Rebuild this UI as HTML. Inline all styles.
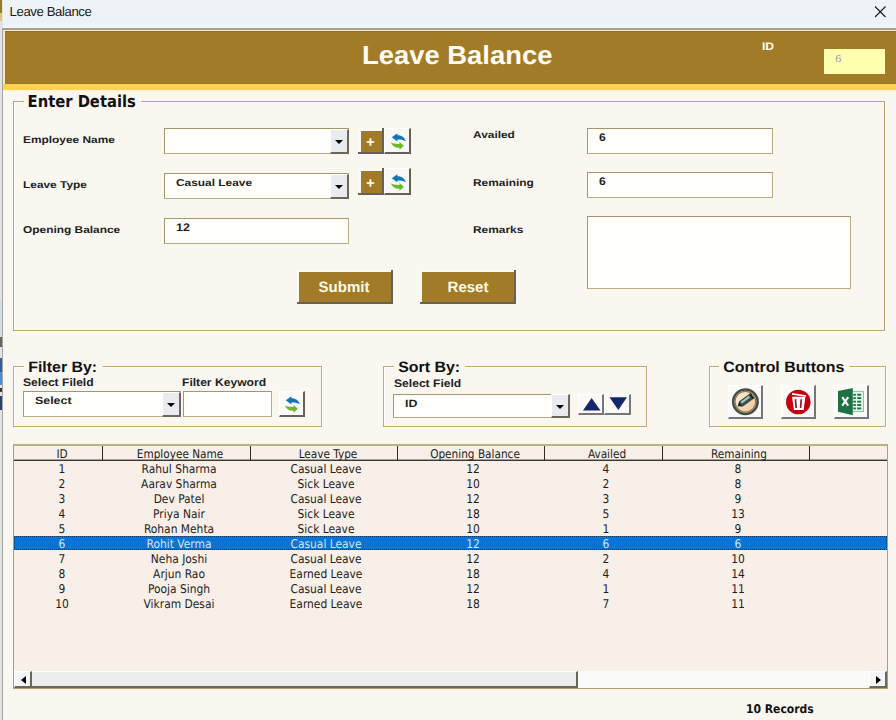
<!DOCTYPE html>
<html><head><meta charset="utf-8"><title>Leave Balance</title>
<style>
*{box-sizing:border-box;margin:0;padding:0}
html,body{width:896px;height:720px;overflow:hidden}
body{position:relative;text-rendering:geometricPrecision;background:#faf7f1;font-family:"Liberation Sans",sans-serif;color:#1c1c1c}
.a{position:absolute}
.t{position:absolute;white-space:nowrap;line-height:1}
.lbl,.val{font-weight:bold;font-size:10px;text-rendering:geometricPrecision;color:#1e1e1e;transform:scaleX(1.19);transform-origin:0 0;margin-top:1.95px;margin-left:-0.2px}
.gt{font-weight:bold;font-size:15px;color:#111;background:#faf7f1;transform:scaleX(1.06);transform-origin:0 0}
.lbl2{font-size:11px;transform:scaleX(1.1)}
.val2{font-size:10.5px;transform:scaleX(1.18)}
.grp{position:absolute;border:1px solid #b9a670;box-shadow:1px 1px 0 #fff, inset 1px 1px 0 #fff}
.tb{position:absolute;background:#fffefb;border:1px solid #b9ab82;border-top-color:#a4966f;border-left-color:#a4966f}
.dd{position:absolute;background:#e9ebf0;border-right:2px solid #6d6757;border-bottom:2px solid #6d6757;border-left:1px solid #fff;border-top:1px solid #fff}
.dd:after{content:"";position:absolute;left:4px;top:10px;border-left:4px solid transparent;border-right:4px solid transparent;border-top:4.5px solid #000}
.btn{position:absolute;border-right:2px solid #666258;border-bottom:2px solid #666258;border-left:1px solid #fff;border-top:1px solid #fff}
.brown{background:#a17b27}
.white{background:#f9f8f6}
.soft{border-right-color:#76767a;border-bottom-color:#76767a;background:#faf9f8}
.lst{font-family:"DejaVu Sans Condensed","DejaVu Sans","Liberation Sans",sans-serif;font-size:12px;color:#1d1d1d}
.c{position:absolute;white-space:nowrap;line-height:1;transform:translateX(-50%) scaleX(0.975)}
.r{transform:translateX(-50%) scaleX(0.99)}
</style></head><body>

<!-- title bar -->
<div class="a" style="left:0;top:0;width:896px;height:28px;background:#eef3f8"></div>
<div class="a" style="left:0;top:17px;width:896px;height:6px;background:#ebf2f9"></div>
<div class="a" style="left:0;top:26px;width:896px;height:2px;background:#f3f6fa"></div>
<div class="a" style="left:0;top:28px;width:896px;height:2px;background:#a5a199"></div>
<div class="t" style="left:9.6px;top:5.4px;font-size:13.2px;letter-spacing:-0.42px;color:#1b1b1b">Leave Balance</div>
<svg class="a" style="left:872px;top:4px" width="16" height="16" viewBox="0 0 16 16"><path d="M3 2.5 L13.5 13 M13.5 2.5 L3 13" stroke="#1a1a1a" stroke-width="1.1" fill="none"/></svg>

<!-- left strip -->
<div class="a" style="left:0;top:0;width:3px;height:720px;background:#e3e4df"></div>
<div class="a" style="left:2px;top:28px;width:1px;height:692px;background:#a3a3a8"></div>
<div class="a" style="left:0;top:300px;width:2px;height:36px;background:#d3dbe6"></div>
<div class="a" style="left:0;top:337px;width:2px;height:10px;background:#6b665c"></div>
<div class="a" style="left:0;top:358px;width:2px;height:14px;background:#2f5f95"></div>
<div class="a" style="left:0;top:372px;width:2px;height:13px;background:#4a8fd8"></div>
<div class="a" style="left:0;top:388px;width:2px;height:4px;background:#3a3a3a"></div>
<div class="a" style="left:0;top:396px;width:2px;height:14px;background:#27456b"></div>
<div class="a" style="left:0;top:0;width:2px;height:13px;background:#9d7a2c"></div>
<div class="a" style="left:0;top:13px;width:2px;height:8px;background:#dcc67e"></div>

<!-- header -->
<div class="a" style="left:3px;top:30px;width:893px;height:53.6px;background:#a17b27;border-left:2px solid #fbe6c4;border-top:1px solid #fbe6c4"></div>
<div class="a" style="left:5px;top:31px;width:891px;height:1px;background:#93722a"></div>
<div class="a" style="left:5px;top:82.6px;width:891px;height:1px;background:#94742a"></div>
<div class="a" style="left:3px;top:83.6px;width:893px;height:6px;background:#ffd34e"></div>
<div class="a" style="left:3px;top:89.6px;width:893px;height:1px;background:#fdf3d0"></div>
<div class="t" style="left:361.8px;top:42px;font-size:26px;font-weight:bold;color:#fffdf5;transform:scaleX(1.054);transform-origin:0 0">Leave Balance</div>
<div class="t lbl" style="left:761.8px;top:39.9px;font-size:11px;transform:scaleX(1.1);color:#fffdf5">ID</div>
<div class="a" style="left:824.4px;top:49.4px;width:60.4px;height:24.7px;background:#ffffad"></div>
<div class="t lbl" style="left:835px;top:52.6px;font-weight:normal;color:#a3a3a3">6</div>

<!-- Enter Details group -->
<div class="grp" style="left:13px;top:101px;width:872px;height:230px"></div>
<div class="t gt" style="left:23.6px;top:94.3px;padding:0 5px 0 4px;font-family:'DejaVu Sans Condensed','Liberation Sans',sans-serif;font-size:16.4px;transform:none">Enter Details</div>

<div class="t lbl" style="left:23.4px;top:134.1px">Employee Name</div>
<div class="t lbl" style="left:23.4px;top:179.1px">Leave Type</div>
<div class="t lbl" style="left:23.4px;top:224.2px">Opening Balance</div>
<div class="t lbl" style="left:473px;top:129px">Availed</div>
<div class="t lbl" style="left:473px;top:176.7px">Remaining</div>
<div class="t lbl" style="left:473px;top:223.6px">Remarks</div>

<div class="tb" style="left:164px;top:128px;width:185px;height:26px"></div>
<div class="dd" style="left:330px;top:129px;width:19px;height:25px"></div>
<div class="tb" style="left:164px;top:173px;width:185px;height:26px"></div>
<div class="dd" style="left:330px;top:174px;width:19px;height:25px"></div>
<div class="t val" style="left:175.8px;top:177.3px">Casual Leave</div>
<div class="tb" style="left:164px;top:218px;width:185px;height:26px"></div>
<div class="t val lbl2" style="left:175.8px;top:220.9px;transform:scaleX(1.14)">12</div>

<div class="a" style="left:358px;top:128px;width:26px;height:26px;background:#666258"><div class="a" style="left:0;top:0;width:24px;height:24px;background:#fcfaf6"></div><div class="a" style="left:3px;top:3px;width:21px;height:21px;background:#a17b27"></div></div>
<div class="t" style="left:365.9px;top:135.3px;font-size:15px;font-weight:bold;color:#fffbe8">+</div>
<div class="btn white" style="left:384px;top:128px;width:27px;height:26px"></div>
<div class="a" style="left:358px;top:168px;width:26px;height:27px;background:#666258"><div class="a" style="left:0;top:0;width:24px;height:25px;background:#fcfaf6"></div><div class="a" style="left:3px;top:3px;width:21px;height:22px;background:#a17b27"></div></div>
<div class="t" style="left:365.9px;top:176.2px;font-size:15px;font-weight:bold;color:#fffbe8">+</div>
<div class="btn white" style="left:384px;top:168px;width:27px;height:27px"></div>

<div class="tb" style="left:587px;top:128px;width:186px;height:26px"></div>
<div class="t val lbl2" style="left:599.2px;top:131.3px">6</div>
<div class="tb" style="left:587px;top:172px;width:186px;height:26px"></div>
<div class="t val lbl2" style="left:599.2px;top:175.5px">6</div>
<div class="tb" style="left:587px;top:216px;width:264px;height:73px"></div>

<div class="a" style="left:296.5px;top:270.2px;width:96.5px;height:34.3px;background:#666258"><div class="a" style="left:0;top:0;width:94.6px;height:32.1px;background:#fcfaf6"></div><div class="a" style="left:2.4px;top:2.2px;width:92.2px;height:29.9px;background:#a17b27"></div></div>
<div class="t" style="left:318.6px;top:280.2px;font-size:15px;font-weight:bold;color:#fffbe8">Submit</div>
<div class="a" style="left:419.8px;top:270.2px;width:96.7px;height:34.3px;background:#666258"><div class="a" style="left:0;top:0;width:94.7px;height:32.1px;background:#fcfaf6"></div><div class="a" style="left:2.4px;top:2.2px;width:92.3px;height:29.9px;background:#a17b27"></div></div>
<div class="t" style="left:447.6px;top:280.2px;font-size:15px;font-weight:bold;color:#fffbe8">Reset</div>

<!-- Filter By -->
<div class="grp" style="left:13px;top:366px;width:309px;height:61px;border-color:#c7a872"></div>
<div class="t gt" style="left:24px;top:360.1px;padding:0 5px 0 4px">Filter By:</div>
<div class="t lbl lbl2" style="left:23.3px;top:376.5px">Select Fileld</div>
<div class="t lbl lbl2" style="left:182.5px;top:376.5px">Filter Keyword</div>
<div class="tb" style="left:23px;top:391px;width:158px;height:26px"></div>
<div class="dd" style="left:162px;top:392px;width:19px;height:25px"></div>
<div class="t val val2" style="left:34.9px;top:393.85px">Select</div>
<div class="tb" style="left:183px;top:391px;width:89px;height:26px"></div>
<div class="btn white" style="left:279px;top:391px;width:26px;height:26px;background:#fbfaf8"></div>

<!-- Sort By -->
<div class="grp" style="left:383px;top:366px;width:264px;height:61px;border-color:#c7a872"></div>
<div class="t gt" style="left:394px;top:360.1px;padding:0 5px 0 4px">Sort By:</div>
<div class="t lbl lbl2" style="left:393.8px;top:376.7px">Select Field</div>
<div class="tb" style="left:393px;top:393.6px;width:176px;height:24.6px"></div>
<div class="dd" style="left:551px;top:393.6px;width:18.5px;height:24.6px"></div>
<div class="t val val2" style="left:405.6px;top:397.1px">ID</div>
<div class="btn white soft" style="left:578px;top:394px;width:26px;height:21px"></div>
<div class="btn white soft" style="left:604px;top:394px;width:27px;height:21px"></div>
<svg class="a" style="left:578px;top:394px" width="54" height="21" viewBox="0 0 54 21"><path d="M13.6 4 L22.5 16.5 L5 16.5 Z M31.5 3.3 L49 3.3 L40.3 16 Z" fill="#14276b"/></svg>

<!-- Control Buttons -->
<div class="grp" style="left:709px;top:366px;width:177px;height:61px;border-color:#c7a872"></div>
<div class="t gt" style="left:719px;top:360.1px;padding:0 5px 0 4px">Control Buttons</div>
<div class="btn white soft" style="left:728px;top:385px;width:35px;height:34px"></div>
<div class="btn white soft" style="left:781px;top:385px;width:35px;height:34px"></div>
<div class="btn white soft" style="left:834px;top:385px;width:35px;height:34px"></div>

<svg class="a" style="left:384px;top:128px" width="27" height="26" viewBox="0 0 27 26"><path d="M7.8 9.3 L13.4 5.2 L13.4 7.3 C18 7.3 21 9.8 21.8 13.6 C19.5 11.6 17 11.3 13.4 11.4 L13.4 13.6 Z" fill="#1273b7"/><path d="M19.9 17.8 L15.5 13.9 L15.5 16 C11 16 8 15.5 6.8 14.3 C8 18 11 20 15.5 19.8 L15.5 21.8 Z" fill="#6bb82d"/></svg>
<svg class="a" style="left:384px;top:168.5px" width="27" height="26" viewBox="0 0 27 26"><path d="M7.8 9.3 L13.4 5.2 L13.4 7.3 C18 7.3 21 9.8 21.8 13.6 C19.5 11.6 17 11.3 13.4 11.4 L13.4 13.6 Z" fill="#1273b7"/><path d="M19.9 17.8 L15.5 13.9 L15.5 16 C11 16 8 15.5 6.8 14.3 C8 18 11 20 15.5 19.8 L15.5 21.8 Z" fill="#6bb82d"/></svg>
<svg class="a" style="left:278.4px;top:391.3px" width="27" height="26" viewBox="0 0 27 26"><path d="M7.8 9.3 L13.4 5.2 L13.4 7.3 C18 7.3 21 9.8 21.8 13.6 C19.5 11.6 17 11.3 13.4 11.4 L13.4 13.6 Z" fill="#1273b7"/><path d="M19.9 17.8 L15.5 13.9 L15.5 16 C11 16 8 15.5 6.8 14.3 C8 18 11 20 15.5 19.8 L15.5 21.8 Z" fill="#6bb82d"/></svg>
<svg class="a" style="left:728px;top:385px" width="35" height="34" viewBox="0 0 35 34">
<defs><linearGradient id="pg" x1="0" y1="0" x2="1" y2="1"><stop offset="0.2" stop-color="#fdeccd"/><stop offset="0.9" stop-color="#f2c29b"/></linearGradient></defs>
<circle cx="17.4" cy="16.7" r="12.2" fill="url(#pg)" stroke="#414e49" stroke-width="2.6"/>
<circle cx="17.4" cy="16.7" r="10.3" fill="none" stroke="#8a7a52" stroke-width="1.1"/>
<g transform="rotate(-36 17.3 15.8)"><rect x="12" y="12.6" width="12" height="6.4" fill="#35504f"/><rect x="13" y="13.8" width="10" height="2.2" fill="#a9c6c6"/><path d="M12 12.6 L8 15.8 L12 19 Z" fill="#17221f"/><rect x="24" y="12.6" width="2.2" height="6.4" fill="#1c1c1c"/></g>
</svg>
<svg class="a" style="left:781px;top:385px" width="35" height="34" viewBox="0 0 35 34">
<circle cx="17.3" cy="17" r="12.3" fill="#c5000d"/>
<path d="M11 11.8 L24.4 11.8 L22.6 25 L13 25 Z" fill="#fff"/>
<path d="M14.4 14.2 L15.2 23 M20.2 14.2 L19.6 23" stroke="#8e1c25" stroke-width="1.7" fill="none"/>
<path d="M11 8.9 L25 11" stroke="#fff" stroke-width="1.7"/>
</svg>
<svg class="a" style="left:834px;top:385px" width="35" height="34" viewBox="0 0 35 34">
<rect x="16" y="6.3" width="13.4" height="20.3" fill="#e4f8ec" stroke="#7dbb98" stroke-width="0.9"/>
<rect x="19.3" y="8.8" width="2.6" height="1.9" fill="#1f7145"/><rect x="23.2" y="8.8" width="4" height="1.9" fill="#1f7145"/><rect x="19.3" y="12.2" width="2.6" height="1.9" fill="#1f7145"/><rect x="23.2" y="12.2" width="4" height="1.9" fill="#1f7145"/><rect x="19.3" y="15.7" width="2.6" height="1.9" fill="#1f7145"/><rect x="23.2" y="15.7" width="4" height="1.9" fill="#1f7145"/><rect x="19.3" y="19.1" width="2.6" height="1.9" fill="#1f7145"/><rect x="23.2" y="19.1" width="4" height="1.9" fill="#1f7145"/><rect x="19.3" y="22.5" width="2.6" height="1.9" fill="#1f7145"/><rect x="23.2" y="22.5" width="4" height="1.9" fill="#1f7145"/>
<path d="M4 5.9 L18.8 3 L18.8 30.2 L4 26.8 Z" fill="#1f7145"/>
<path d="M8.3 12.2 L14.2 20.6 M14.2 12.2 L8.3 20.6" stroke="#fff" stroke-width="2.1"/>
</svg>
<!-- List -->
<div class="a" style="left:13px;top:444px;width:875px;height:245px;background:#f8efe8;border:1px solid #b39f66;border-top:2px solid #bab285"></div>
<div class="a" style="left:14px;top:459px;width:873px;height:2px;background:linear-gradient(#a39f99 0 50%,#3c3934 50% 100%)"></div>

<div class="lst">
<div class="a" style="left:102px;top:446px;width:1px;height:14px;background:#2e2a22"></div>
<div class="a" style="left:250px;top:446px;width:1px;height:14px;background:#2e2a22"></div>
<div class="a" style="left:397px;top:446px;width:1px;height:14px;background:#2e2a22"></div>
<div class="a" style="left:544px;top:446px;width:1px;height:14px;background:#2e2a22"></div>
<div class="a" style="left:662px;top:446px;width:1px;height:14px;background:#2e2a22"></div>
<div class="a" style="left:809px;top:446px;width:1px;height:14px;background:#2e2a22"></div>
<div class="c" style="left:62px;top:448.2px">ID</div>
<div class="c" style="left:180px;top:448.2px">Employee Name</div>
<div class="c" style="left:327.5px;top:448.2px">Leave Type</div>
<div class="c" style="left:474.5px;top:448.2px">Opening Balance</div>
<div class="c" style="left:606.5px;top:448.2px">Availed</div>
<div class="c" style="left:738.9px;top:448.2px">Remaining</div>
<div class="c r" style="left:62px;top:463.4px">1</div>
<div class="c r" style="left:179.2px;top:463.4px">Rahul Sharma</div>
<div class="c r" style="left:326.3px;top:463.4px">Casual Leave</div>
<div class="c r" style="left:473.2px;top:463.4px">12</div>
<div class="c r" style="left:605.7px;top:463.4px">4</div>
<div class="c r" style="left:738px;top:463.4px">8</div>
<div class="c r" style="left:62px;top:478.4px">2</div>
<div class="c r" style="left:179.2px;top:478.4px">Aarav Sharma</div>
<div class="c r" style="left:326.3px;top:478.4px">Sick Leave</div>
<div class="c r" style="left:473.2px;top:478.4px">10</div>
<div class="c r" style="left:605.7px;top:478.4px">2</div>
<div class="c r" style="left:738px;top:478.4px">8</div>
<div class="c r" style="left:62px;top:493.4px">3</div>
<div class="c r" style="left:179.2px;top:493.4px">Dev Patel</div>
<div class="c r" style="left:326.3px;top:493.4px">Casual Leave</div>
<div class="c r" style="left:473.2px;top:493.4px">12</div>
<div class="c r" style="left:605.7px;top:493.4px">3</div>
<div class="c r" style="left:738px;top:493.4px">9</div>
<div class="c r" style="left:62px;top:508.4px">4</div>
<div class="c r" style="left:179.2px;top:508.4px">Priya Nair</div>
<div class="c r" style="left:326.3px;top:508.4px">Sick Leave</div>
<div class="c r" style="left:473.2px;top:508.4px">18</div>
<div class="c r" style="left:605.7px;top:508.4px">5</div>
<div class="c r" style="left:738px;top:508.4px">13</div>
<div class="c r" style="left:62px;top:523.4px">5</div>
<div class="c r" style="left:179.2px;top:523.4px">Rohan Mehta</div>
<div class="c r" style="left:326.3px;top:523.4px">Sick Leave</div>
<div class="c r" style="left:473.2px;top:523.4px">10</div>
<div class="c r" style="left:605.7px;top:523.4px">1</div>
<div class="c r" style="left:738px;top:523.4px">9</div>
<div class="a" style="left:14px;top:536px;width:873px;height:14.4px;background:#0a74d4;outline:1px dotted #0a3a6a;outline-offset:-1px"></div>
<div class="c r" style="color:#c9e8ff;left:62px;top:538.4px">6</div>
<div class="c r" style="color:#c9e8ff;left:179.2px;top:538.4px">Rohit Verma</div>
<div class="c r" style="color:#c9e8ff;left:326.3px;top:538.4px">Casual Leave</div>
<div class="c r" style="color:#c9e8ff;left:473.2px;top:538.4px">12</div>
<div class="c r" style="color:#c9e8ff;left:605.7px;top:538.4px">6</div>
<div class="c r" style="color:#c9e8ff;left:738px;top:538.4px">6</div>
<div class="c r" style="left:62px;top:553.4px">7</div>
<div class="c r" style="left:179.2px;top:553.4px">Neha Joshi</div>
<div class="c r" style="left:326.3px;top:553.4px">Casual Leave</div>
<div class="c r" style="left:473.2px;top:553.4px">12</div>
<div class="c r" style="left:605.7px;top:553.4px">2</div>
<div class="c r" style="left:738px;top:553.4px">10</div>
<div class="c r" style="left:62px;top:568.4px">8</div>
<div class="c r" style="left:179.2px;top:568.4px">Arjun Rao</div>
<div class="c r" style="left:326.3px;top:568.4px">Earned Leave</div>
<div class="c r" style="left:473.2px;top:568.4px">18</div>
<div class="c r" style="left:605.7px;top:568.4px">4</div>
<div class="c r" style="left:738px;top:568.4px">14</div>
<div class="c r" style="left:62px;top:583.4px">9</div>
<div class="c r" style="left:179.2px;top:583.4px">Pooja Singh</div>
<div class="c r" style="left:326.3px;top:583.4px">Casual Leave</div>
<div class="c r" style="left:473.2px;top:583.4px">12</div>
<div class="c r" style="left:605.7px;top:583.4px">1</div>
<div class="c r" style="left:738px;top:583.4px">11</div>
<div class="c r" style="left:62px;top:598.4px">10</div>
<div class="c r" style="left:179.2px;top:598.4px">Vikram Desai</div>
<div class="c r" style="left:326.3px;top:598.4px">Earned Leave</div>
<div class="c r" style="left:473.2px;top:598.4px">18</div>
<div class="c r" style="left:605.7px;top:598.4px">7</div>
<div class="c r" style="left:738px;top:598.4px">11</div>
</div>
<!-- scrollbar -->
<div class="a" style="left:14px;top:671px;width:873px;height:17px;background:#fafaf9"></div>
<div class="a" style="left:32px;top:671px;width:546px;height:17px;background:#ededed;border-right:2px solid #6d6757;border-bottom:2px solid #6d6757;border-top:1px solid #fff"></div>
<div class="a" style="left:14px;top:671px;width:18px;height:17px;background:#f6f6f6;border-right:2px solid #6d6757;border-bottom:2px solid #6d6757;border-top:1px solid #fff;border-left:1px solid #fff"></div>
<div class="a" style="left:21px;top:675.5px;border-top:4px solid transparent;border-bottom:4px solid transparent;border-right:5px solid #000"></div>
<div class="a" style="left:869px;top:671px;width:18px;height:17px;background:#f6f6f6;border-right:2px solid #6d6757;border-bottom:2px solid #6d6757;border-top:1px solid #fff;border-left:1px solid #fff"></div>
<div class="a" style="left:875.5px;top:675.5px;border-top:4px solid transparent;border-bottom:4px solid transparent;border-left:5px solid #000"></div>
<div class="t" style="left:746px;top:702.5px;font-family:'DejaVu Sans Condensed','Liberation Sans',sans-serif;font-weight:bold;font-size:12px;color:#111">10 Records</div>
</body></html>
